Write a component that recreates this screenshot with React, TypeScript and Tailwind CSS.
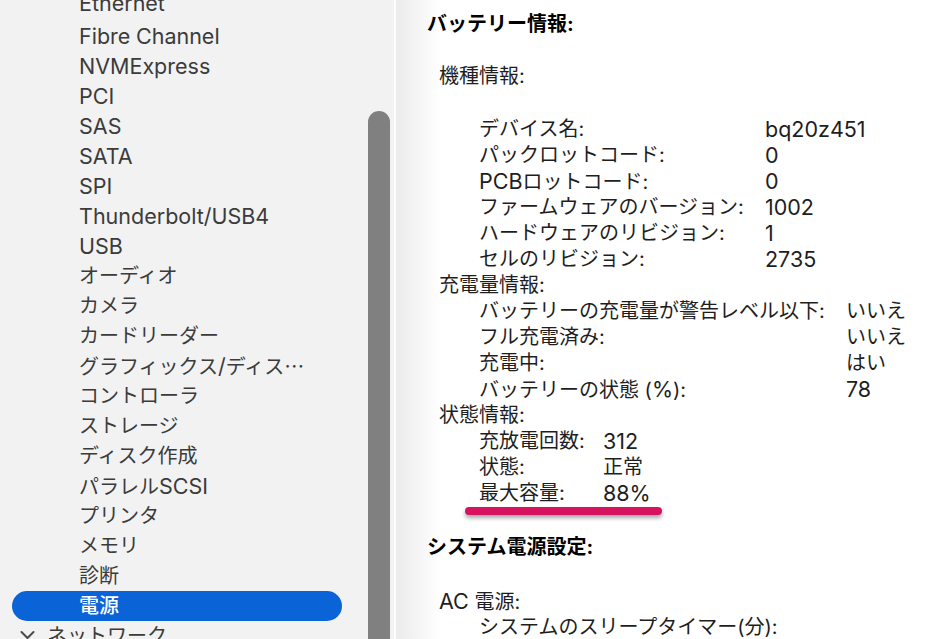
import { Fragment } from "react";

// sidebar rows above the selected one
const devices = [
  "Ethernet",
  "Fibre Channel",
  "NVMExpress",
  "PCI",
  "SAS",
  "SATA",
  "SPI",
  "Thunderbolt/USB4",
  "USB",
  "オーディオ",
  "カメラ",
  "カードリーダー",
  "グラフィックス/ディス…",
  "コントローラ",
  "ストレージ",
  "ディスク作成",
  "パラレルSCSI",
  "プリンタ",
  "メモリ",
  "診断",
];

const modelInfo: [string, string][] = [
  ["デバイス名:", "bq20z451"],
  ["パックロットコード:", "0"],
  ["PCBロットコード:", "0"],
  ["ファームウェアのバージョン:", "1002"],
  ["ハードウェアのリビジョン:", "1"],
  ["セルのリビジョン:", "2735"],
];

const chargeInfo: [string, string][] = [
  ["バッテリーの充電量が警告レベル以下:", "いいえ"],
  ["フル充電済み:", "いいえ"],
  ["充電中:", "はい"],
  ["バッテリーの状態 (%):", "78"],
];

const healthInfo: [string, string][] = [
  ["充放電回数:", "312"],
  ["状態:", "正常"],
  ["最大容量:", "88%"],
];

const font = { fontFamily: 'Inter, "Noto Sans CJK JP", sans-serif' };

// latin runs are drawn a touch larger so they get the width of the mac system font
function T({ s }: { s: string }) {
  const parts = s.split(/([A-Za-z0-9/%]+|…)/);
  return (
    <>
      {parts.map((p, i) =>
        p === "" ? null : p === "…" ? (
          <span key={i} style={{ fontFamily: '"Noto Sans CJK JP", sans-serif' }}>
            ⋯
          </span>
        ) : /[A-Za-z0-9/%]/.test(p) ? (
          <span key={i} className="text-[21.5px]">
            {p}
          </span>
        ) : (
          <Fragment key={i}>{p}</Fragment>
        ),
      )}
    </>
  );
}

function Group({ rows, keyWidth }: { rows: [string, string][]; keyWidth: string }) {
  return (
    <div className={`grid pl-[52px] ${keyWidth}`}>
      {rows.map(([k, v]) => (
        <Fragment key={k}>
          <div className="h-[26px] whitespace-nowrap">
            <T s={k} />
          </div>
          <div className="h-[26px] whitespace-nowrap">
            <T s={v} />
          </div>
        </Fragment>
      ))}
    </div>
  );
}

export default function App() {
  return (
    <div className="flex h-[639px] w-[943px] overflow-hidden bg-white" style={font}>
      {/* sidebar */}
      <div className="flex w-[396px] shrink-0 border-r-2 border-white bg-[#f2f2f2]">
        <div className="-mt-[9px] w-[368px] pl-3 pr-[26px] text-[20px] leading-[30px] text-[#3b3b3b]">
          {devices.map((d, i) => (
            <div key={d} className={`h-[30px] whitespace-nowrap pl-[67px] ${i === 0 ? "-translate-y-[3px]" : ""}`}>
              <T s={d} />
            </div>
          ))}
          <div className="h-[30px] rounded-full bg-[#0b63d8] pl-[67px] font-medium text-white">電源</div>
          <div className="flex h-[30px] items-center gap-3 pl-2">
            <svg width="15" height="10" viewBox="0 0 15 10" className="mt-[-2px]">
              <polyline points="1.5,2 7.5,8 13.5,2" fill="none" stroke="#4a4a4a" strokeWidth="2" strokeLinecap="round" strokeLinejoin="round" />
            </svg>
            <span>ネットワーク</span>
          </div>
        </div>
        {/* scrollbar */}
        <div className="flex w-[22px] flex-col">
          <div className="h-[111px] shrink-0" />
          <div className="flex-1 rounded-t-full bg-[#808080]" />
        </div>
      </div>

      {/* detail panel */}
      <div className="flex-1 bg-[linear-gradient(to_right,#ebebeb_0px,#ffffff_45px)] pl-[31px] pt-[11px] text-[20px] leading-[26px] text-[#1e1e1e]">
        <div className="h-[26px] font-bold text-black">バッテリー情報:</div>
        <div className="h-[26px]" />
        <div className="h-[26px] pl-3">機種情報:</div>
        <div className="h-[27px]" />
        <Group rows={modelInfo} keyWidth="grid-cols-[286px_auto]" />
        <div className="h-[26px] pl-3">充電量情報:</div>
        <Group rows={chargeInfo} keyWidth="grid-cols-[367px_auto]" />
        <div className="h-[26px] pl-3">状態情報:</div>
        <div className="relative">
          <Group rows={healthInfo} keyWidth="grid-cols-[124px_auto]" />
          <div className="absolute left-[38px] top-[79px] h-[8px] w-[197px] rounded-full bg-[#d7135f] shadow-[0_3px_4px_rgba(0,0,0,0.35)]" />
        </div>
        <div className="h-[28px]" />
        <div className="h-[26px] font-bold text-black">システム電源設定:</div>
        <div className="h-[28px]" />
        <div className="h-[26px] pl-3">
          <T s="AC 電源:" />
        </div>
        <div className="h-[26px] pl-[52px]">システムのスリープタイマー(分):</div>
      </div>
    </div>
  );
}
